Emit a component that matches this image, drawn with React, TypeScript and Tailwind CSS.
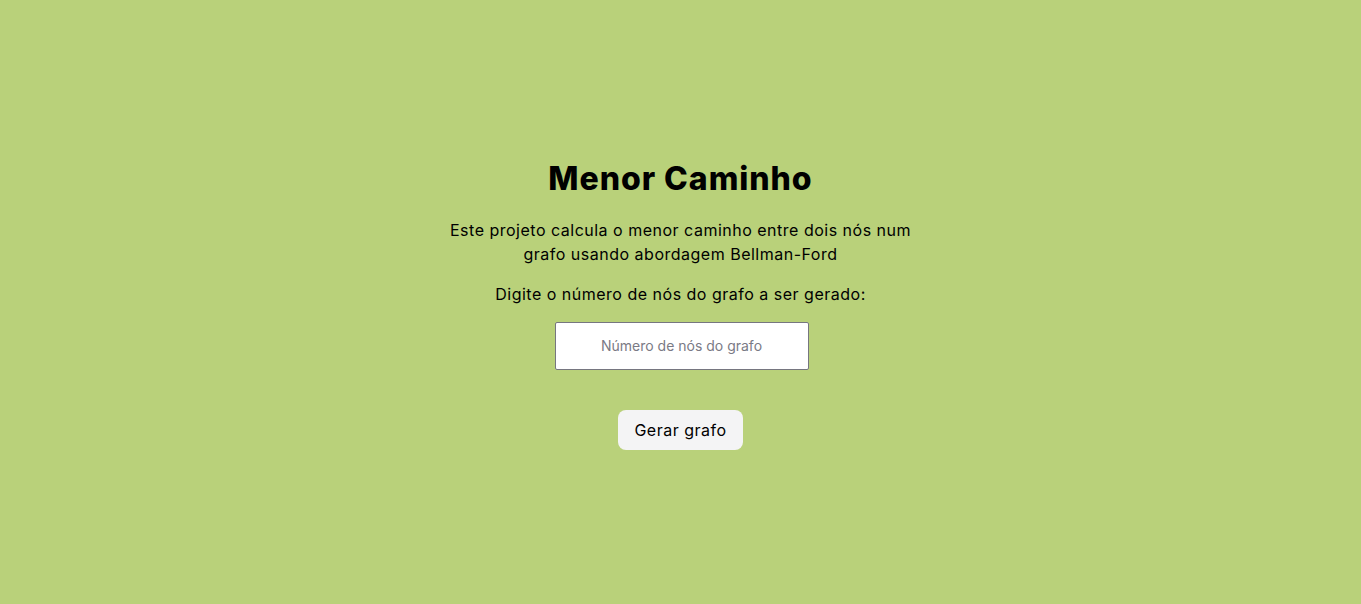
export default function App() {
  return (
    <div
      className="min-h-screen w-full bg-[#b9d17a] flex flex-col items-center justify-center text-black"
      style={{ fontFamily: "Inter, 'Noto Sans', sans-serif" }}
    >
      <h1 className="text-[32px] leading-[48px] font-extrabold tracking-[0.03em]">Menor Caminho</h1>
      <p className="mt-[15px] text-[16px] leading-6 text-center tracking-[0.5px]">
        Este projeto calcula o menor caminho entre dois nós num
        <br />
        grafo usando abordagem Bellman-Ford
      </p>
      <p className="mt-4 text-[16px] leading-6 text-center tracking-[0.5px]">
        Digite o número de nós do grafo a ser gerado:
      </p>
      <input
        type="text"
        placeholder="Número de nós do grafo"
        className="mt-4 ml-[2px] w-[254px] h-12 bg-white border border-[#767680] rounded-[2px] text-center text-[14px] placeholder:text-[#7a7a85] outline-none"
      />
      <button className="mt-10 h-10 px-4 rounded-lg bg-[#f4f4f5] text-[16px] tracking-[0.5px] text-black">
        Gerar grafo
      </button>
    </div>
  )
}
